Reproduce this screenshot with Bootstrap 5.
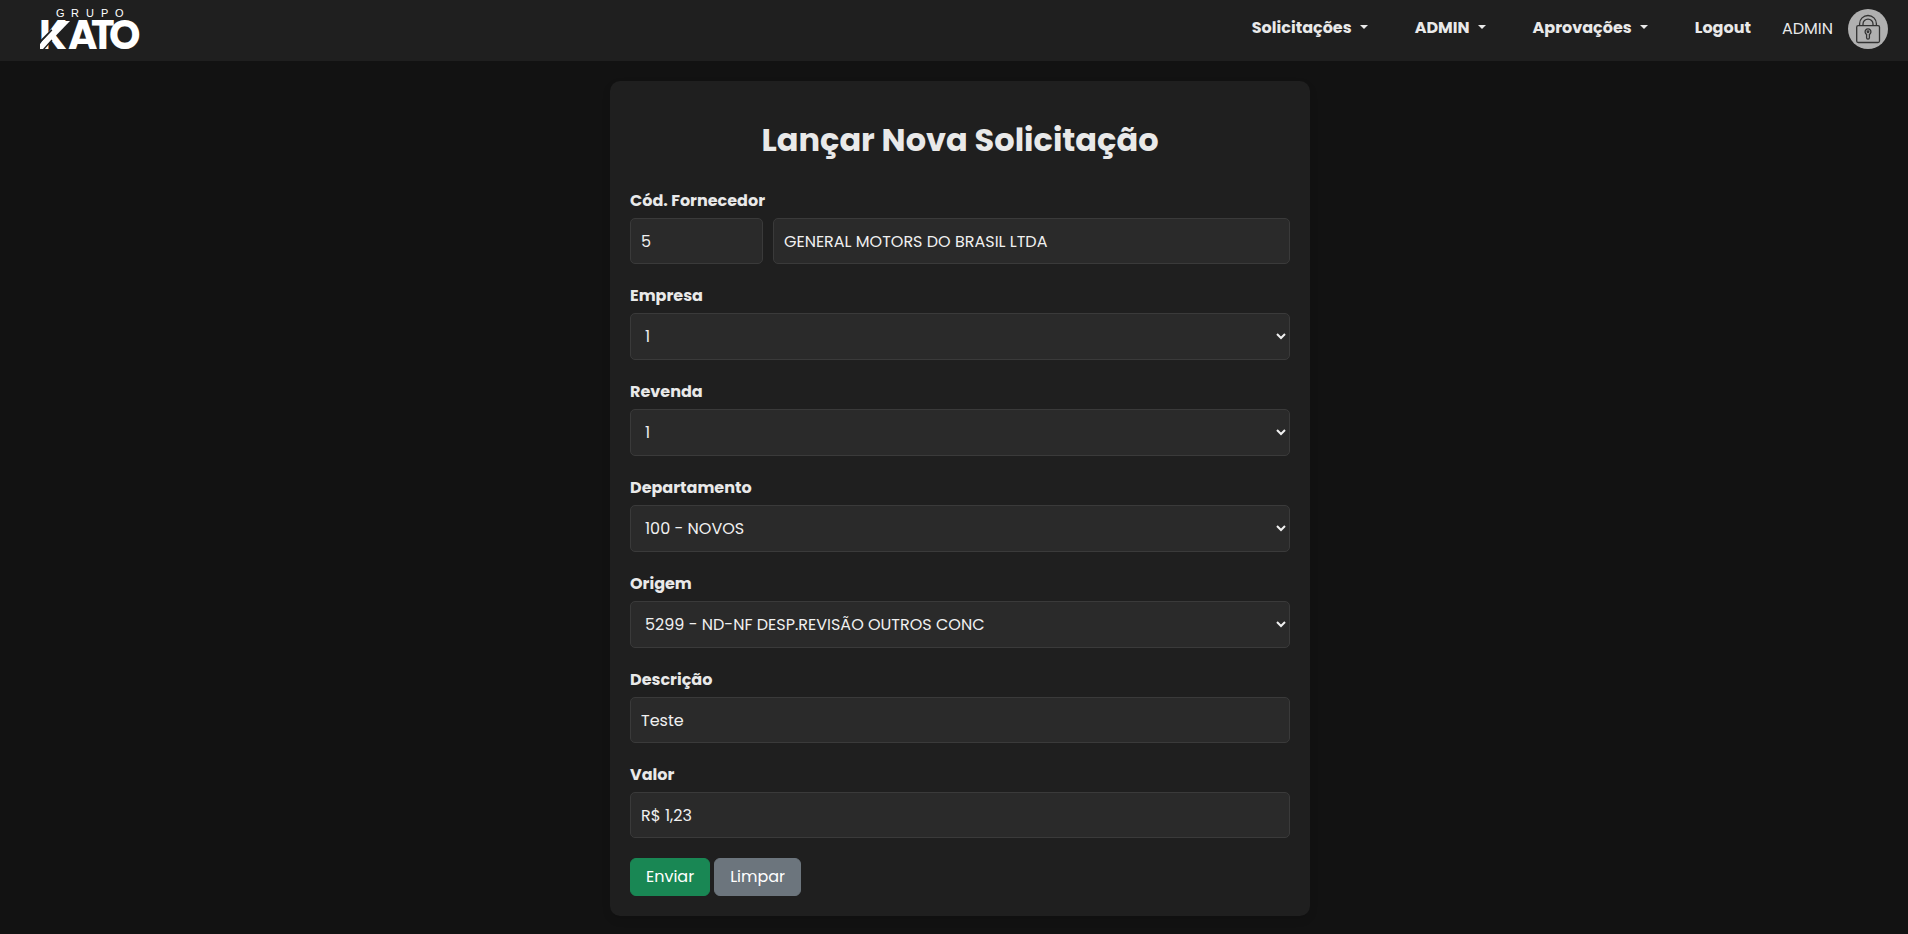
<!DOCTYPE html>
<html lang="pt-BR" data-bs-theme="dark">
<head>
<meta charset="utf-8">
<meta name="viewport" content="width=device-width, initial-scale=1">
<title>Lançar Nova Solicitação</title>
<link href="https://cdn.jsdelivr.net/npm/bootstrap@5.3.0/dist/css/bootstrap.min.css" rel="stylesheet">
<style>
  body { background: #121212; color: #e9e9e9; font-family: Poppins, Inter, sans-serif; font-size: 16px; line-height: 24px; }
  .topbar { background: #1f1f1f; padding: 9px 20px 12px 40px; }
  .topbar .nav-link { color: #e9e9e9; font-weight: 700; padding: 7px 8px 9px; line-height: 22px; }
  .topbar .navbar-nav { gap: 31px; }
  .topbar .dropdown-toggle::after { margin-left: 8px; }
  .topbar .brand-logo { overflow: visible; }
  .user-box { margin-left: 23px; gap: 15px; }
  .page-area { padding: 20px 0 18px 12px; }
  .request-card { max-width: 700px; padding: 20px; background: #1f1f1f; border-radius: 10px; box-shadow: 0 4px 8px rgba(0, 0, 0, .1); }
  .request-card h1 { color: #e9e9e9; font-size: 32px; line-height: 38px; font-weight: 700; margin: 20px 0 30px; }
  .field { margin-bottom: 20px; }
  .field label { display: block; font-weight: 700; margin-bottom: 5px; }
  .field input, .field select { width: 100%; height: 46px; padding: 10px; color: #f0f0f0; background: #2a2a2a; border: 1px solid #3a3a3a; border-radius: 5px; }
  .field select { height: 47px; }
  .field .code-row { gap: 10px; }
  .field .code-input { width: 133px; }
  .request-card .btn { padding: 6px 15px; }
</style>
</head>
<body>
<nav class="navbar navbar-expand-lg topbar">
  <a class="navbar-brand p-0 m-0 d-flex" href="#" aria-label="Grupo Kato">
    <svg class="brand-logo" width="101" height="40" viewBox="0 0 101 40" fill="#fff">
      <text x="16 31 46 61 75" y="8" font-family="Liberation Sans, sans-serif" font-size="11">GRUPO</text>
      <text x="-1 28 51 69" y="40" font-family="Poppins, sans-serif" font-weight="700" font-size="40">KATO</text>
      <path d="M-1 34 L12 21" stroke="#1f1f1f" stroke-width="2"/>
      <path d="M0 35 L21 12 H30 L3 40 H0z"/>
      <path d="M3 41 L12 31" stroke="#1f1f1f" stroke-width="1.3"/>
    </svg>
  </a>
  <button class="navbar-toggler" type="button" data-bs-toggle="collapse" data-bs-target="#menu" aria-label="Menu"><span class="navbar-toggler-icon"></span></button>
  <div class="collapse navbar-collapse justify-content-end" id="menu">
    <ul class="navbar-nav">
      <li class="nav-item dropdown"><a class="nav-link dropdown-toggle" href="#" role="button" data-bs-toggle="dropdown">Solicitações</a></li>
      <li class="nav-item dropdown"><a class="nav-link dropdown-toggle" href="#" role="button" data-bs-toggle="dropdown">ADMIN</a></li>
      <li class="nav-item dropdown"><a class="nav-link dropdown-toggle" href="#" role="button" data-bs-toggle="dropdown">Aprovações</a></li>
      <li class="nav-item"><a class="nav-link" href="#">Logout</a></li>
    </ul>
    <div class="user-box d-flex align-items-center">
      <span>ADMIN</span>
      <svg width="40" height="40" viewBox="0 0 40 40" fill="none" stroke="#333" stroke-width="1.3" aria-hidden="true">
        <circle cx="20" cy="20" r="20" fill="#b0b0b0" stroke="none"/>
        <rect x="8.7" y="16.7" width="22.8" height="16.8" rx="1.5"/>
        <path d="M11.6 16.5v-1.8a8.4 8.2 0 0 1 16.8 0v1.8M15 16.5v-1.6a5 4.8 0 0 1 10 0v1.6"/>
        <path d="M18.6 25.4a2.9 2.9 0 1 1 2.8 0v3.4a1.4 1.4 0 0 1-2.8 0z"/>
        <circle cx="20" cy="22.8" r=".8"/>
      </svg>
    </div>
  </div>
</nav>
<main class="page-area">
  <form class="request-card mx-auto">
    <h1 class="text-center">Lançar Nova Solicitação</h1>
    <div class="field">
      <label for="codigo">Cód. Fornecedor</label>
      <div class="code-row d-flex">
        <input class="code-input flex-shrink-0" id="codigo" type="text" value="5">
        <input type="text" aria-label="Nome do fornecedor" value="GENERAL MOTORS DO BRASIL LTDA">
      </div>
    </div>
    <div class="field">
      <label for="empresa">Empresa</label>
      <select id="empresa"><option>1</option></select>
    </div>
    <div class="field">
      <label for="revenda">Revenda</label>
      <select id="revenda"><option>1</option></select>
    </div>
    <div class="field">
      <label for="departamento">Departamento</label>
      <select id="departamento"><option>100 - NOVOS</option></select>
    </div>
    <div class="field">
      <label for="origem">Origem</label>
      <select id="origem"><option>5299 - ND-NF DESP.REVISÃO OUTROS CONC</option></select>
    </div>
    <div class="field">
      <label for="descricao">Descrição</label>
      <input id="descricao" type="text" value="Teste">
    </div>
    <div class="field">
      <label for="valor">Valor</label>
      <input id="valor" type="text" value="R$ 1,23">
    </div>
    <div class="d-flex gap-1">
      <button class="btn btn-success" type="submit">Enviar</button>
      <button class="btn btn-secondary" type="reset">Limpar</button>
    </div>
  </form>
</main>
<script src="https://cdn.jsdelivr.net/npm/bootstrap@5.3.0/dist/js/bootstrap.bundle.min.js"></script>
</body>
</html>
